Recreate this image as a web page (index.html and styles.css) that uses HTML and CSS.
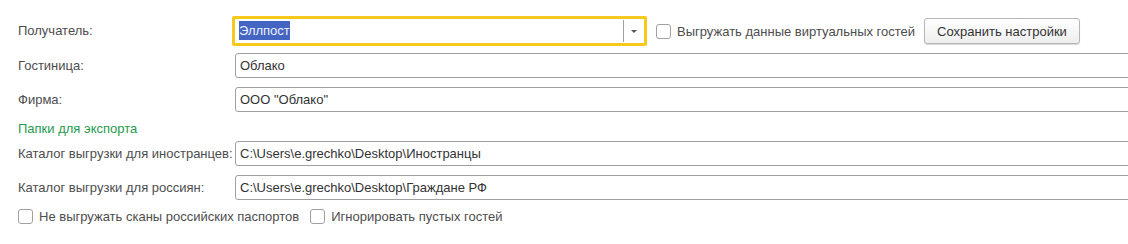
FILE: index.html
```html
<!DOCTYPE html>
<html>
  <head>
    <title>Выгрузка гостей</title>
    <link rel="stylesheet" href="styles.css">
  </head>
  <body>

    <div class="form">

      <!--ПОЛУЧАТЕЛЬ-->
      <div class="label firstRow">Получатель:</div>
      <div class="field firstRow">
        <div class="combo">
          <span class="comboText"><span class="selected">Эллпост</span></span>
          <span class="comboButton"><span class="arrow"></span></span>
        </div>
        <label class="check virtualCheck">
          <span class="box"></span>
          Выгружать данные виртуальных гостей
        </label>
        <button class="saveButton">Сохранить настройки</button>
      </div>

      <div class="label">Гостиница:</div>
      <div class="field">
        <div class="textBox">Облако</div>
      </div>

      <div class="label">Фирма:</div>
      <div class="field">
        <div class="textBox">ООО "Облако"</div>
      </div>

      <div class="groupTitle">Папки для экспорта</div>

      <div class="label">Каталог выгрузки для иностранцев:</div>
      <div class="field">
        <div class="textBox">C:\Users\e.grechko\Desktop\Иностранцы</div>
      </div>

      <div class="label">Каталог выгрузки для россиян:</div>
      <div class="field">
        <div class="textBox">C:\Users\e.grechko\Desktop\Граждане РФ</div>
      </div>

      <!--ФЛАЖКИ-->
      <div class="checkRow">
        <label class="check">
          <span class="box"></span>
          Не выгружать сканы российских паспортов
        </label>
        <label class="check">
          <span class="box"></span>
          Игнорировать пустых гостей
        </label>
      </div>

    </div>

  </body>
</html>
```

FILE: styles.css
```css
body{
  margin: 0;
  font-family: "Liberation Sans", Arial, sans-serif;
  font-size: 13px;
  color: #4d4d4d;
  background-color: white;
  overflow: hidden;
}

.form{
  display: grid;
  grid-template-columns: 217px 1fr;
  row-gap: 9px;
  padding: 18px 0 0 18px;
}

.label{
  height: 25px;
  line-height: 25px;
  white-space: nowrap;
}

.field{
  display: flex;
  align-items: center;
  height: 25px;
}

.firstRow{
  height: 26px;
  line-height: 26px;
}

.textBox{
  box-sizing: border-box;
  flex-shrink: 0;
  width: calc(100% + 20px);  /* runs past the window edge */
  height: 25px;
  line-height: 23px;
  padding-left: 4px;
  border: 1px solid #a0a0a0;
  border-radius: 3px;
  color: #333;
  white-space: nowrap;
}

.combo{
  box-sizing: border-box;
  display: flex;
  flex-shrink: 0;
  width: 415px;
  height: 30px;
  margin-left: -3px;
  border: 3px solid #f8c91d;
  border-radius: 2px;
  line-height: 24px;
}

.comboText{
  flex: 1;
  padding-left: 4px;
  color: #333;
}

.selected{
  background-color: #4565c3;
  color: #eef1fb;
  padding: 2px 0;
}

.comboButton{
  width: 20px;
  margin: 1px 0;
  border-left: 1px solid #a0a0a0;
  display: flex;
  align-items: center;
  justify-content: center;
}

.arrow{
  width: 0;
  height: 0;
  border-left: 3px solid transparent;
  border-right: 3px solid transparent;
  border-top: 3px solid #555;
}

.check{
  display: flex;
  align-items: center;
  white-space: nowrap;
  line-height: 15px;
}

.box{
  box-sizing: border-box;
  width: 15px;
  height: 15px;
  margin-right: 6px;
  border: 1px solid #a0a0a0;
  border-radius: 3px;
  background-color: white;
}

.virtualCheck{
  margin-left: 9px;
}

.saveButton{
  margin-left: 9px;
  height: 26px;
  padding: 0 12px;
  font-family: inherit;
  font-size: 13px;
  color: #333;
  border: 1px solid #b5b5b5;
  border-radius: 3px;
  background: linear-gradient(#ffffff, #eeeeee);
  box-shadow: 0 1px 1px rgba(0, 0, 0, 0.15);
}

.groupTitle{
  grid-column: 1 / 3;
  height: 11px;
  line-height: 16px;
  color: #1f9b4c;
}

.checkRow{
  grid-column: 1 / 3;
  display: flex;
  gap: 11px;
  height: 15px;
}
```
